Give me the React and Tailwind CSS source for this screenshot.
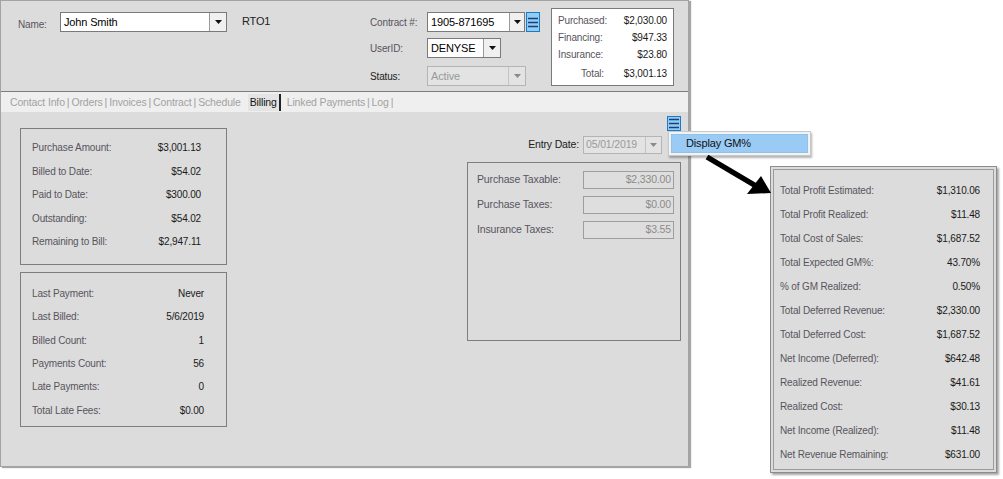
import React from "react";

const Caret = ({ muted }) => (
  <svg width="7" height="4" viewBox="0 0 7 4">
    <path d="M0 0h7L3.5 4z" fill={muted ? "#8a8a8a" : "#111"} />
  </svg>
);

const MenuIcon = ({ className }) => (
  <div
    className={`flex items-center justify-center bg-[#8fcdf4] border border-[#1f79c4] ${className}`}
  >
    <svg width="10" height="11" viewBox="0 0 10 11">
      <path d="M0 1.5h10M0 5.5h10M0 9.5h10" stroke="#1b3f78" strokeWidth="1.6" />
    </svg>
  </div>
);

const Combo = ({ value, width, disabled, btn = 17 }) => (
  <div
    className={`flex h-[20px] border ${
      disabled ? "border-[#b4b4b4] bg-[#e3e3e3]" : "border-[#7a7a7a] bg-white"
    }`}
    style={{ width }}
  >
    <div
      className={`flex-1 flex items-center pl-[3px] text-[11px] ${
        disabled ? "text-[#9a9a9a]" : "text-black"
      }`}
    >
      {value}
    </div>
    <div
      className={`flex items-center justify-center border-l ${
        disabled ? "border-[#c4c4c4] bg-[#e3e3e3]" : "border-[#9a9a9a] bg-[#f0f0f0]"
      }`}
      style={{ width: btn }}
    >
      <Caret muted={disabled} />
    </div>
  </div>
);

const Row = ({ label, value, h }) => (
  <div className="flex items-center justify-between" style={{ height: h }}>
    <span className="text-[#59545c]">{label}</span>
    <span className="text-[#1a1a1a]">{value}</span>
  </div>
);

const billing = [
  ["Purchase Amount:", "$3,001.13"],
  ["Billed to Date:", "$54.02"],
  ["Paid to Date:", "$300.00"],
  ["Outstanding:", "$54.02"],
  ["Remaining to Bill:", "$2,947.11"],
];

const payments = [
  ["Last Payment:", "Never"],
  ["Last Billed:", "5/6/2019"],
  ["Billed Count:", "1"],
  ["Payments Count:", "56"],
  ["Late Payments:", "0"],
  ["Total Late Fees:", "$0.00"],
];

const taxes = [
  ["Purchase Taxable:", "$2,330.00"],
  ["Purchase Taxes:", "$0.00"],
  ["Insurance Taxes:", "$3.55"],
];

const gm = [
  ["Total Profit Estimated:", "$1,310.06"],
  ["Total Profit Realized:", "$11.48"],
  ["Total Cost of Sales:", "$1,687.52"],
  ["Total Expected GM%:", "43.70%"],
  ["% of GM Realized:", "0.50%"],
  ["Total Deferred Revenue:", "$2,330.00"],
  ["Total Deferred Cost:", "$1,687.52"],
  ["Net Income (Deferred):", "$642.48"],
  ["Realized Revenue:", "$41.61"],
  ["Realized Cost:", "$30.13"],
  ["Net Income (Realized):", "$11.48"],
  ["Net Revenue Remaining:", "$631.00"],
];

const tabs = ["Contact Info", "Orders", "Invoices", "Contract"];

const App = () => {
  return (
    <div className="relative w-[1003px] h-[479px] bg-white flex font-['Liberation_Sans',Arial,sans-serif] text-[10px] tracking-[-0.15px]">
      {/* main window */}
      <div className="w-[689px] h-[467px] bg-[#dcdcdc] border border-[#a3a3a3] shadow-[2px_1px_1px_rgba(0,0,0,0.35)] flex flex-col">
        {/* header */}
        <div className="h-[90px] flex pt-[11px] pl-[17px]">
          <div className="w-[352px] flex items-start">
            <span className="w-[42px] mt-[5px] text-[#59545c] text-[10px]">Name:</span>
            <Combo value="John Smith" width={167} />
            <span className="ml-[15px] mt-[1px] text-[11px] text-[#222]">RTO1</span>
          </div>
          <div className="w-[181px] flex flex-col">
            <div className="flex items-center h-[20px]">
              <span className="w-[57px] text-[#59545c]">Contract #:</span>
              <Combo value="1905-871695" width={98} btn={15} />
              <MenuIcon className="ml-[1px] w-[14px] h-[20px]" />
            </div>
            <div className="flex items-center h-[20px] mt-[6px]">
              <span className="w-[57px] text-[#59545c]">UserID:</span>
              <Combo value="DENYSE" width={74} />
            </div>
            <div className="flex items-center h-[20px] mt-[8px]">
              <span className="w-[57px] text-[#222]">Status:</span>
              <Combo value="Active" width={99} disabled />
            </div>
          </div>
          <div className="w-[123px] h-[78px] -mt-[4px] bg-white border border-[#7a7a7a] px-[6px] pt-[3px] flex flex-col">
            <Row label="Purchased:" value="$2,030.00" h={17} />
            <Row label="Financing:" value="$947.33" h={17} />
            <Row label="Insurance:" value="$23.80" h={17} />
            <div className="flex items-center justify-between h-[20px] pl-[23px]">
              <span className="text-[#59545c]">Total:</span>
              <span className="text-[#1a1a1a]">$3,001.13</span>
            </div>
          </div>
        </div>

        {/* tabs */}
        <div className="h-[21px] border-t border-[#7d7d7d] bg-[#efefef] flex items-center pt-[1px] pl-[9px] text-[#a2a2a2] text-[10.5px]">
          {tabs.map((t) => (
            <React.Fragment key={t}>
              <span>{t}</span>
              <span className="mx-[2px] text-[#9c9c9c]">|</span>
            </React.Fragment>
          ))}
          <span>Schedule</span>
          <span className="ml-[7px] px-[2px] h-[17px] flex items-center bg-[#e4e4e4] text-[#111] border-r-2 border-[#222]">
            Billing
          </span>
          <span className="ml-[6px]">Linked Payments</span>
          <span className="mx-[2px]">|</span>
          <span>Log</span>
          <span className="mx-[2px]">|</span>
        </div>

        {/* content */}
        <div className="flex-1 flex pl-[19px]">
          <div className="w-[207px] pt-[16px] flex flex-col gap-[7px]">
            <div className="h-[137px] border border-[#7e7e7e] pl-[11px] pr-[25px] pt-[7px]">
              {billing.map(([l, v]) => (
                <Row key={l} label={l} value={v} h={23.5} />
              ))}
            </div>
            <div className="h-[155px] border border-[#7e7e7e] pl-[11px] pr-[22px] pt-[9px]">
              {payments.map(([l, v]) => (
                <Row key={l} label={l} value={v} h={23.3} />
              ))}
            </div>
          </div>

          <div className="ml-[240px] w-[214px] pt-[4px] flex flex-col">
            <div className="flex justify-end">
              <MenuIcon className="w-[14px] h-[15px]" />
            </div>
            <div className="flex items-center justify-end mt-[5px] pr-[19px]">
              <span className="text-[#222] text-[10.5px] mr-[4px]">Entry Date:</span>
              <div className="w-[79px] h-[18px] flex border border-[#b4b4b4] bg-[#e3e3e3]">
                <div className="flex-1 flex items-center pl-[2px] text-[#9a9a9a] text-[10.5px]">05/01/2019</div>
                <div className="w-[16px] flex items-center justify-center border-l border-[#c4c4c4]">
                  <Caret muted />
                </div>
              </div>
            </div>
            <div className="mt-[8px] h-[179px] border border-[#7e7e7e] pl-[9px] pr-[6px] pt-[8px] flex flex-col gap-[7px]">
              {taxes.map(([l, v]) => (
                <div key={l} className="flex items-center justify-between h-[18px]">
                  <span className="text-[#59545c] text-[10.5px]">{l}</span>
                  <div className="w-[91px] h-[18px] border border-[#9e9e9e] bg-[#dedede] flex items-center justify-end pr-[2px] text-[#8c8c8c] text-[10.5px]">
                    {v}
                  </div>
                </div>
              ))}
            </div>
          </div>
        </div>
      </div>

      {/* callout panel */}
      <div className="ml-[81px] mt-[166px] w-[227px] h-[307px] border border-[#8c8c8c] bg-[#dcdcdc] shadow-[2px_2px_2px_rgba(0,0,0,0.35)] p-[2px]">
        <div className="h-full border border-[#9c9c9c] pl-[6px] pr-[13px] pt-[8px]">
          {gm.map(([l, v]) => (
            <Row key={l} label={l} value={v} h={24.05} />
          ))}
        </div>
      </div>

      {/* popup menu */}
      <div className="absolute left-[668px] top-[131px] w-[143px] h-[25px] bg-[#f2f2f2] border border-[#c9c9c9] shadow-[1px_2px_2px_rgba(0,0,0,0.3)] p-[2px]">
        <div className="h-full bg-[#99cbf5] border border-[#8ec3ee] flex items-center pl-[14px] text-[11px] text-[#111]">
          Display GM%
        </div>
      </div>

      {/* arrow */}
      <svg className="absolute left-[700px] top-[150px]" width="80" height="50" viewBox="0 0 80 50">
        <path d="M7 7L56 36" stroke="#000" strokeWidth="5.5" strokeLinecap="butt" />
        <path d="M71 43L47 44L61 26z" fill="#000" />
      </svg>
    </div>
  );
};

export default App;
